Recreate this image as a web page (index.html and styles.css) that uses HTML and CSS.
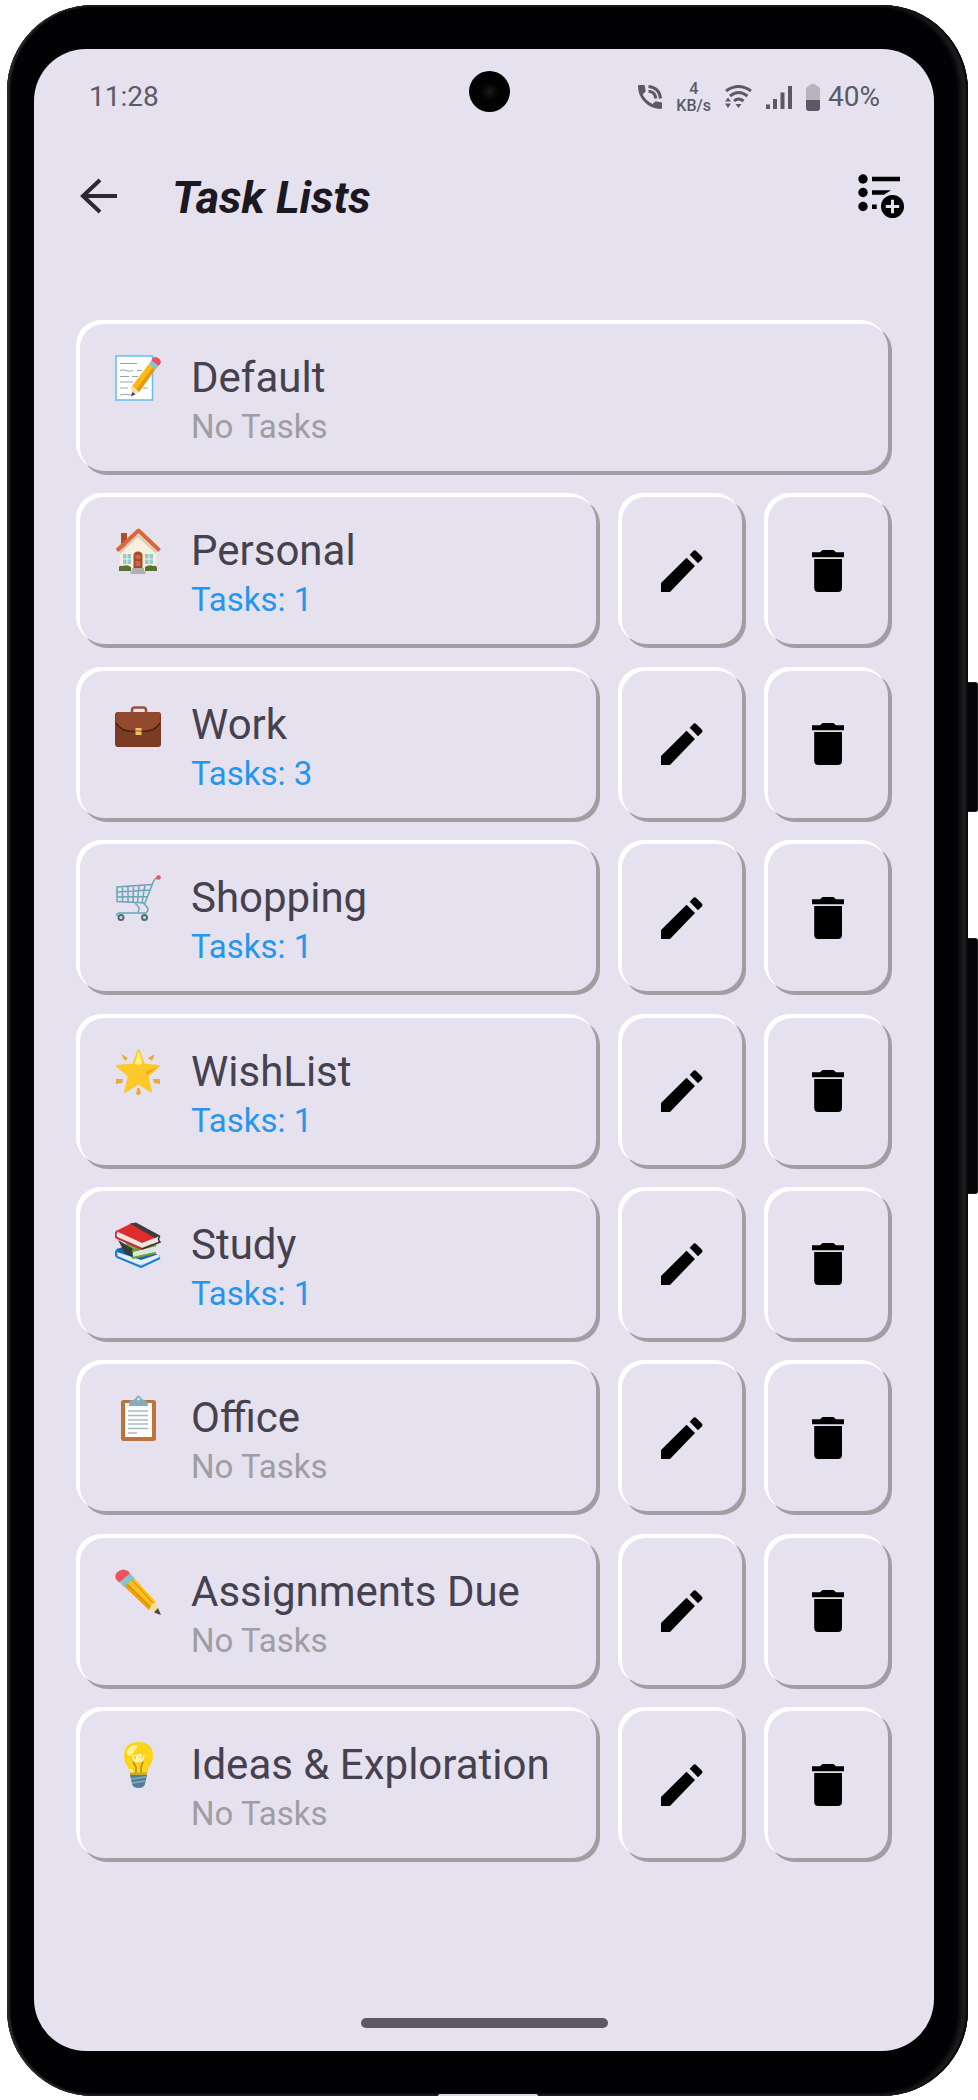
FILE: index.html
```html
<!DOCTYPE html>
<html lang="en">
<head>
<meta charset="utf-8">
<meta name="viewport" content="width=device-width, initial-scale=1">
<title>Task Lists</title>
<link rel="stylesheet" href="styles.css">
</head>
<body>
<svg class="sprite" aria-hidden="true">
  <symbol id="edit" viewBox="0 0 42 42"><path d="M0 42V33L25.5 7.7 34 16 9 42zM28.7 4.7 32 1.2Q33.7-.6 35.4 1.2L40.6 6.2Q42.4 8 40.6 9.8L37 13.3z"/></symbol>
  <symbol id="trash" viewBox="0 0 42 42"><path d="M5 2.3H13L15.5 0H26.5L29 2.3H37V7.3H5zM7.2 9H35V37.5Q35 42 31 42H11.2Q7.2 42 7.2 37.5z"/></symbol>
</svg>
<div class="phone">
  <span class="side-key side-key-power"></span>
  <span class="side-key side-key-volume"></span>
  <span class="port"></span>
  <div class="screen">
    <span class="camera"></span>
    <div class="status">
      <span class="status-text">11:28</span>
      <div class="status-icons">
        <svg class="call" viewBox="0 0 24 24"><path d="M1 0H6.5L7.8 6.3 4.6 9.6Q8 16 14.5 19L17.6 16.2 24 17.6V23Q24 24 22.8 24Q13 24 6.5 17Q0 10.500 0 1Q0 0 1 0z"/><path class="line" d="M10.500 6.200Q17 6.500 17.800 13.500M10.500 1.500Q21.500 2.500 22.500 13.500"/></svg>
        <span class="speed"><span>4</span><span>KB/s</span></span>
        <svg class="wifi" viewBox="0 0 27 24"><path class="line" d="M1 6Q13.500-3 26 6M5 11Q13.500 4 22.500 11M9 16Q13.500 12 18.500 16"/><path d="M13.500 23 10.500 19H16.500zM3 12.500 6 16.500H0zM3 23 0 18.500H6z"/></svg>
        <svg class="signal" viewBox="0 0 26 24"><path d="M0 19.500H4V24H0zM7 14H11V24H7zM14.500 7.500H18.500V24H14.500zM22 1H26V24H22z"/></svg>
        <span class="power">
          <svg class="battery" viewBox="0 0 14 28"><path class="battery-empty" d="M4 2Q7-1 10 2L13 4Q14 5 14 6V17H0V6Q0 5 1 4z"/><path d="M0 17H14V25Q14 28 11 28H3Q0 28 0 25z"/></svg>
          <span class="status-text">40%</span>
        </span>
      </div>
    </div>
    <header class="appbar">
      <button class="icon-button" aria-label="Back"><svg class="back" viewBox="0 0 37 36"><path d="M20 2 3 18 20 34M3 18H37"/></svg></button>
      <h1 class="title">Task Lists</h1>
      <button class="icon-button" aria-label="Add list"><svg class="add" viewBox="0 0 46 44"><circle cx="5" cy="5" r="4.700"/><circle cx="5" cy="18.500" r="4.700"/><circle cx="5" cy="32.500" r="4.700"/><path d="M14 2.700H42V7.300H14zM14 16.300H33L26 20.700H14zM14 30.500H18.700V35H14z"/><circle cx="34.500" cy="32.500" r="11.500"/><path class="plus" d="M27.800 32.500H41.200M34.500 25.800V39.200"/></svg></button>
    </header>
    <ul class="lists">
      <li class="row">
        <button class="card">
          <svg class="emoji" viewBox="0 0 46 46"><path fill="#fff" stroke="#66bff0" stroke-width="1.500" d="M1 1H37.500V45H1z"/><path fill="none" stroke="#9aa3aa" stroke-width="1" d="M5 8.500H22M5 15.500Q8 14 11 15.500T18 15.500M22 15.500H27M5 21.500H14M17 21.500H23M5 27H18M5 33H13M16 33H19M28 33H33M5 40Q9 38.500 16 40"/><path fill="#fbb916" d="M34 9 40 15 24 37 17 31z"/><path fill="#e99a10" d="M37.500 12.500 40 15 24 37 21 34.500z"/><path fill="#f8dcae" d="M17 31 24 37 16.500 41z"/><path fill="#48423f" d="M17.300 37 20.500 39.200 16 41.500z"/><path fill="#82c4d5" d="M34 9 36.500 5.500 43.500 11 40 15z"/><path fill="#ed4f5c" d="M36.500 5.500Q38 1 41.500 2.200 46 4 45.800 7.500 45.500 9 43.500 11z"/></svg>
          <span class="name">Default</span><span class="count">No Tasks</span>
        </button>
      </li>
      <li class="row">
        <button class="card">
          <svg class="emoji" viewBox="0 0 46 46"><path fill="#a84e2e" d="M6 5H12V20H6z"/><path fill="#f7f0df" d="M23 5 41 23V43H5V23z"/><path fill="#d9ccb6" d="M5 23 23 6 41 23V26L23 9 5 26z"/><path fill="none" stroke="#dd6539" stroke-width="4" stroke-linejoin="round" d="M2 22.500 23.500 2.500 44.500 22.500"/><path fill="#93c9c6" d="M8 26H16V36H8zM30 26H38V36H30z"/><path stroke="#f7f0df" d="M12 26V36M8 31H16M34 26V36M30 31H38"/><path fill="#a8482c" d="M18.500 41V27Q19 23.500 23 23.500T27.500 27V41z"/><path fill="#cb6744" d="M20.500 27H25.500V31H20.500zM20.500 33H25.500V38H20.500z"/><path fill="#58722d" d="M4 43V39Q5 37 8 38 12 36 16 39V43zM30 43V39Q34 36 38 38 42 37 42 40V43z"/><path fill="#b0afb1" d="M17 40H29V43H30.500V46H15.500V43H17z"/></svg>
          <span class="name">Personal</span><span class="count has-tasks">Tasks: 1</span>
        </button>
        <button class="action" aria-label="Edit Personal"><svg class="action-icon"><use href="#edit"/></svg></button>
        <button class="action" aria-label="Delete Personal"><svg class="action-icon"><use href="#trash"/></svg></button>
      </li>
      <li class="row">
        <button class="card">
          <svg class="emoji" viewBox="0 0 46 46"><path fill="none" stroke="#985238" stroke-width="2.500" d="M17 11V8Q17 5.500 20 5.500H28Q31 5.500 31 8V11"/><rect x="0" y="10" width="46" height="35" rx="3" fill="#7b3c23"/><path fill="#93492d" d="M1 12Q1 10 4 10H42Q45 10 45 12V20Q40 29 28 29H18Q6 29 1 20z"/><path fill="none" stroke="#482315" stroke-width="1.500" d="M1 21Q6 29.500 18 29.500H28Q40 29.500 45 21"/><path fill="#f2bd5c" d="M20.500 26H26.500V33H20.500z"/><path stroke="#8c5926" d="M20.500 29H26.500"/></svg>
          <span class="name">Work</span><span class="count has-tasks">Tasks: 3</span>
        </button>
        <button class="action" aria-label="Edit Work"><svg class="action-icon"><use href="#edit"/></svg></button>
        <button class="action" aria-label="Delete Work"><svg class="action-icon"><use href="#trash"/></svg></button>
      </li>
      <li class="row">
        <button class="card">
          <svg class="emoji" viewBox="0 0 46 46"><g fill="none" stroke="#68a5b5" stroke-width="1.500"><path d="M44 2Q39 3 37 10L30 28 2 26.500V12L37 9.500M2 17 35 15M2 22 32.500 21.500M7.500 12V27M13 11.500V27M18.500 11 18 27.500M24 10.500 22.500 27.500M30 10 27 28M20 28Q26 33 23 37M28 28Q36 34 31 38L5 38Q1 38 2 41"/></g><circle cx="43.500" cy="2.500" r="2.300" fill="#e9565f"/><g fill="#d7d6dd" stroke="#526c73" stroke-width="2"><circle cx="6" cy="42.500" r="2.500"/><circle cx="29.500" cy="42.500" r="2.500"/></g></svg>
          <span class="name">Shopping</span><span class="count has-tasks">Tasks: 1</span>
        </button>
        <button class="action" aria-label="Edit Shopping"><svg class="action-icon"><use href="#edit"/></svg></button>
        <button class="action" aria-label="Delete Shopping"><svg class="action-icon"><use href="#trash"/></svg></button>
      </li>
      <li class="row">
        <button class="card">
          <svg class="emoji" viewBox="0 0 46 46"><path fill="#fdc928" stroke="#fdc928" stroke-width="2" stroke-linejoin="round" d="M23.500 1 29 15.500 44 17 32.500 27 36 42.500 23.500 34.500 10 43 14 27 2 17 18 15.500z"/><path fill="#fff188" d="M23.500 2 27.500 14 24.500 16 20 15z"/><path fill="#eba51c" d="M43 18 32 25.500 30.500 23z"/><path fill="#edaa30" d="M6 5 13 9 10 12zM40 5 37 12 33 9zM1 30 8 30 7 34 1 35zM45 30 38 30 39 34 45 35zM22.500 39H24.500L26 44Q24 48 21 45z"/></svg>
          <span class="name">WishList</span><span class="count has-tasks">Tasks: 1</span>
        </button>
        <button class="action" aria-label="Edit WishList"><svg class="action-icon"><use href="#edit"/></svg></button>
        <button class="action" aria-label="Delete WishList"><svg class="action-icon"><use href="#trash"/></svg></button>
      </li>
      <li class="row">
        <button class="card">
          <svg class="emoji" viewBox="0 0 46 46"><path fill="#1764ad" d="M2 27 19 21 45 34 26 43 2 33z"/><path fill="#e4eef3" d="M2 30 26 38 44 32V36L26 43 3 35z"/><path fill="none" stroke="#1681cd" stroke-width="2" d="M3 27Q-1 31 2 35L26 45 45 36"/><path fill="#77a33a" d="M10 20 30 19 42 24 16 33z"/><path fill="#dde6d8" d="M18 30 40 24V30L18 36z"/><path fill="#343d38" d="M3 18 18 27 17 35 10 31z"/><path fill="none" stroke="#719b39" stroke-width="2" d="M17 29 41 23M17 36 41 31"/><path fill="#df2c2d" d="M1 9 17 1 45 14 27 21z"/><path fill="#413b3e" d="M15 1.500 21 .5 45 13.500 40 16z"/><path fill="#f2e5e1" d="M2 11 27 21 44 15V19L27 26 2 15z"/><path fill="none" stroke="#c52d35" stroke-width="2" d="M2 9Q-1 13 2 16L27 27"/><path fill="none" stroke="#353039" stroke-width="1.500" d="M27 27 45 20Q42 17 45 14"/></svg>
          <span class="name">Study</span><span class="count has-tasks">Tasks: 1</span>
        </button>
        <button class="action" aria-label="Edit Study"><svg class="action-icon"><use href="#edit"/></svg></button>
        <button class="action" aria-label="Delete Study"><svg class="action-icon"><use href="#trash"/></svg></button>
      </li>
      <li class="row">
        <button class="card">
          <svg class="emoji" viewBox="0 0 46 46"><rect x="6" y="5" width="35" height="41" rx="2.500" fill="#bd743c"/><path fill="#fff" d="M10 8H37V42H10z"/><path stroke="#a9babe" stroke-width="1.300" d="M13 16H33M13 20.500H33M13 25H33M13 29H33M13 33.500H33M13 38H22"/><path fill="#82adc1" d="M14 11V8Q14 5 18 5L20 4Q23-3 27 4L29 5Q33 6 33 11z"/><circle cx="23.500" cy="4" r="1.500" fill="#e4e1ee"/></svg>
          <span class="name">Office</span><span class="count">No Tasks</span>
        </button>
        <button class="action" aria-label="Edit Office"><svg class="action-icon"><use href="#edit"/></svg></button>
        <button class="action" aria-label="Delete Office"><svg class="action-icon"><use href="#trash"/></svg></button>
      </li>
      <li class="row">
        <button class="card">
          <svg class="emoji" viewBox="0 0 46 46"><path fill="#fcc018" d="M19 9 41 33 34 41 9 17z"/><path fill="#f0a00f" d="M12 14 9 17 34 41 37 38z"/><path stroke="#c98318" d="M12 15 36 39M17 11 39 35"/><path fill="#f7dda4" d="M41 33 45 45 34 41 37 35z"/><path fill="#4c4845" d="M43 39 46 46 39 43.500z"/><path fill="#83c6d1" d="M15 4.500 20 9 9 18 5 13.500z"/><path fill="#ec5260" d="M4.500 13.500Q-2 9 1.500 4 7-2 13 2L15 4.500z"/></svg>
          <span class="name">Assignments Due</span><span class="count">No Tasks</span>
        </button>
        <button class="action" aria-label="Edit Assignments Due"><svg class="action-icon"><use href="#edit"/></svg></button>
        <button class="action" aria-label="Delete Assignments Due"><svg class="action-icon"><use href="#trash"/></svg></button>
      </li>
      <li class="row">
        <button class="card">
          <svg class="emoji" viewBox="0 0 46 46"><path fill="#fdd41b" d="M23.500 0Q38 0 38 14 38 20 34 25L31.500 34H15.500L13 25Q9 20 9 14 9 0 23.500 0z"/><path fill="#fff18f" d="M12 11Q13 3 21 3 24 5 20 8 17 14 13 14zM14 27 17 27 19 31 15.500 31z"/><path fill="none" stroke="#fff9c4" stroke-width="1.500" d="M18 13Q18 19 21 19 23 13 20 13M21 19Q25 21 26 13 22 11 23 18 28 21 29 13"/><path fill="none" stroke="#a77b24" stroke-width="1.300" d="M18 20 21 25V31M28 20 26 25V31"/><path fill="#cda92b" d="M15 30.500H32V34H15z"/><path fill="#507f95" d="M15 33H32L30 42Q29 46 23.500 46T17 42z"/><path stroke="#85aebb" stroke-width="1.500" d="M16 37 31 35M17 41 30 39"/></svg>
          <span class="name">Ideas &amp; Exploration</span><span class="count">No Tasks</span>
        </button>
        <button class="action" aria-label="Edit Ideas &amp; Exploration"><svg class="action-icon"><use href="#edit"/></svg></button>
        <button class="action" aria-label="Delete Ideas &amp; Exploration"><svg class="action-icon"><use href="#trash"/></svg></button>
      </li>
    </ul>
    <div class="home-bar"></div>
  </div>
</div>
</body>
</html>
```
FILE: styles.css
```css
* { box-sizing: border-box; }
body {
  margin: 0;
  min-height: 100vh;
  display: flex;
  padding: 5px 10px 4px 7px;
  background: #fff;
  font-family: Roboto, sans-serif;
}
button {
  border: 0;
  padding: 0;
  background: none;
  font: inherit;
  color: inherit;
  cursor: pointer;
}
svg { display: block; flex: none; fill: currentColor; }
.sprite { position: absolute; width: 0; height: 0; }

.phone {
  position: relative;
  flex: 1;
  display: flex;
  padding: 44px 34px 45px 27px;
  border-radius: 86px;
  background: #020103;
  box-shadow: inset 3px 0 2px #29282b, inset -2px 0 1px #0b0a0c, inset -8px 0 4px #1d1c1f, inset 0 -2px 2px #1d1c1f, inset 0 2px 1px #141315;
}
.side-key {
  position: absolute;
  left: 100%;
  width: 10px;
  border: 1px solid #1b1a1d;
  border-left: 0;
  border-radius: 0 3px 3px 0;
  background: #050406;
}
.side-key-power { top: 677px; height: 130px; }
.side-key-volume { top: 933px; height: 256px; }
.port {
  position: absolute;
  bottom: 0;
  left: 50%;
  width: 100px;
  height: 2px;
  margin-left: -50px;
  border-radius: 50px 50px 0 0;
  background: #d8d8d8;
}
.screen {
  position: relative;
  flex: 1;
  min-width: 0;
  display: flex;
  flex-direction: column;
  border-radius: 52px;
  background: #e5e1ee;
}
.camera {
  position: absolute;
  top: 22px;
  left: 50%;
  width: 41px;
  height: 41px;
  margin-left: -15px;
  border-radius: 50%;
  background: radial-gradient(circle, #1c1b18 0, #0a0909 6px, #020202 9px);
}

.status {
  display: flex;
  align-items: center;
  justify-content: space-between;
  height: 96px;
  padding: 0 54px 0 55px;
  color: #5c5965;
}
.status-icons { display: flex; align-items: center; gap: 14px; }
.power { display: flex; align-items: center; gap: 8px; }
.status-text { font-size: 28px; line-height: 32px; }
.call { width: 24px; height: 24px; }
.speed {
  display: flex;
  flex-direction: column;
  align-items: center;
  font-size: 16px;
  line-height: 17px;
  font-weight: 500;
}
.wifi { width: 27px; height: 24px; }
.signal { width: 26px; height: 24px; }
.battery { width: 14px; height: 28px; }
.battery-empty { fill: #b7b4bf; }
.line { fill: none; stroke: currentColor; stroke-width: 3; }

.appbar {
  display: flex;
  align-items: center;
  height: 102px;
  padding: 0 30px 0 46px;
}
.title {
  flex: 1;
  margin: 0 0 0 55px;
  padding-top: 4px;
  font-size: 45px;
  line-height: 54px;
  font-weight: 700;
  font-style: italic;
  color: #1b1822;
}
.back { width: 37px; height: 36px; fill: none; stroke: #2b2833; stroke-width: 4; }
.add { width: 46px; height: 44px; fill: #000; }
.plus { stroke: #e5e1ee; stroke-width: 3; }

.lists {
  flex: 1;
  display: flex;
  flex-direction: column;
  justify-content: space-between;
  gap: 26px;
  margin: 0;
  padding: 77px 46px 160px;
  list-style: none;
}
.row { display: flex; gap: 26px; }
.card, .action {
  border-radius: 24px;
  background: #e5e1ee;
  box-shadow: -3px -3px 0 1px #fff, 3px 3px 0 1px #a09da3;
}
.card {
  flex: 1;
  min-width: 0;
  min-height: 147px;
  display: grid;
  grid-template-columns: 46px 1fr;
  grid-template-rows: 50px 48px;
  column-gap: 30px;
  align-items: center;
  align-content: start;
  padding: 29px 34px 18px 35px;
  text-align: left;
}
.emoji { width: 46px; height: 46px; }
.name { font-size: 42px; line-height: 50px; color: #45414f; white-space: nowrap; }
.count { grid-column: 2; font-size: 33px; line-height: 48px; color: #9f9da3; }
.has-tasks { color: #2596ed; }
.action {
  flex: none;
  width: 120px;
  display: flex;
  align-items: center;
  justify-content: center;
  color: #000;
}
.action-icon { width: 42px; height: 42px; }
.home-bar {
  width: 247px;
  height: 10px;
  margin: 0 auto 23px;
  border-radius: 5px;
  background: #5c5965;
}
```
